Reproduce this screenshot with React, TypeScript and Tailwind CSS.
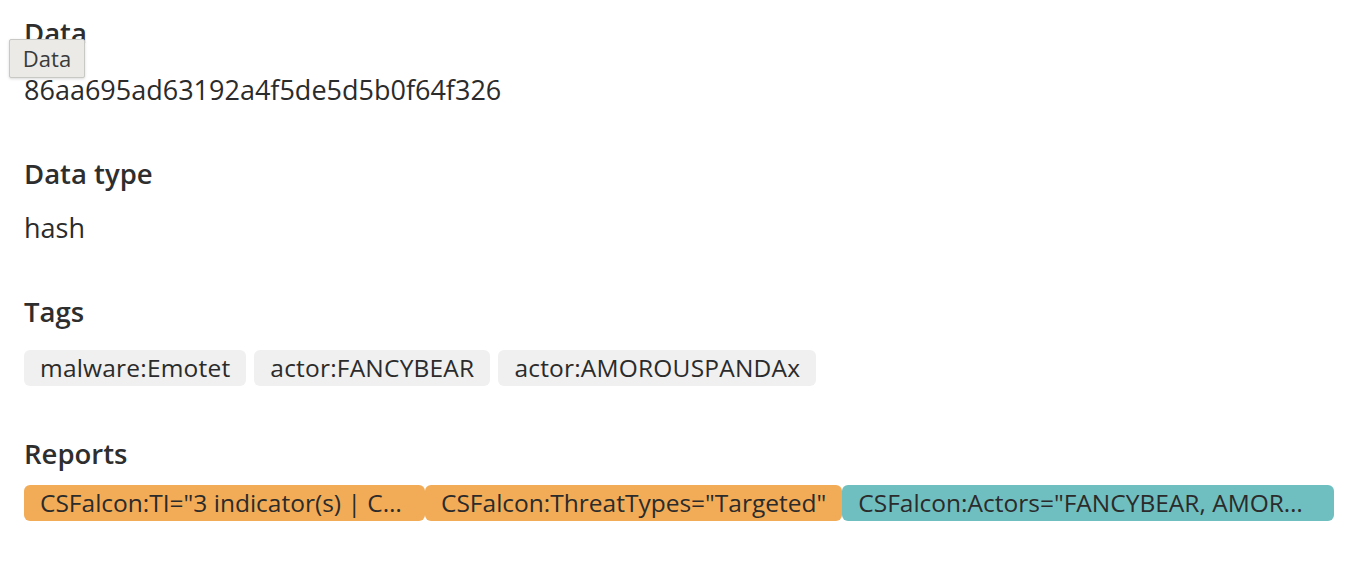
import React from "react";

const font = { fontFamily: '"Open Sans", "Noto Sans", sans-serif' };

function Heading({ children }: { children: React.ReactNode }) {
  return <h3 className="text-[27.5px] leading-8 font-semibold text-[#2e2e2e]">{children}</h3>;
}

export default function App() {
  const tags = ["malware:Emotet", "actor:FANCYBEAR", "actor:AMOROUSPANDAx"];

  return (
    <div className="relative min-h-screen bg-white px-[24px] pt-[17px] text-[#2b2b2b]" style={font}>
      <div className="flex flex-col gap-[52px]">
        <section className="flex flex-col gap-[25px]">
          <Heading>Data</Heading>
          <p className="text-[27px] leading-8">86aa695ad63192a4f5de5d5b0f64f326</p>
        </section>

        <section className="flex flex-col gap-[22px]">
          <Heading>Data type</Heading>
          <p className="text-[27px] leading-8">hash</p>
        </section>

        <section className="flex flex-col gap-[22px]">
          <Heading>Tags</Heading>
          <div className="flex gap-2">
            {tags.map((t) => (
              <span key={t} className="h-9 flex items-center rounded-md bg-[#f0f0f0] px-4 text-[24.5px] tracking-[0.2px]">
                {t}
              </span>
            ))}
          </div>
        </section>

        <section className="flex flex-col gap-[15px]">
          <Heading>Reports</Heading>
          <div className="flex">
            <span className="h-9 w-[401px] shrink-0 flex items-center rounded-md bg-[#f2ac57] px-4 text-[24.5px]">
              <span className="truncate">CSFalcon:TI="3 indicator(s) | Contains malicious hash"</span>
            </span>
            <span className="h-9 shrink-0 flex items-center rounded-md bg-[#f2ac57] px-4 text-[24.5px] whitespace-nowrap">
              CSFalcon:ThreatTypes="Targeted"
            </span>
            <span className="h-9 w-[492px] shrink-0 flex items-center rounded-md bg-[#70bfc0] px-4 text-[24.5px]">
              <span className="truncate">CSFalcon:Actors="FANCYBEAR, AMOROUSPANDA"</span>
            </span>
          </div>
        </section>
      </div>

      <div className="absolute left-[9px] top-[39px] flex h-[39px] w-[76px] items-center justify-center rounded-[2px] border border-[#c8c8c4] bg-[#ebeae6] text-[22px] text-[#3a3a3a] shadow-[0_1px_3px_rgba(0,0,0,0.15)]">
        Data
      </div>
    </div>
  );
}
